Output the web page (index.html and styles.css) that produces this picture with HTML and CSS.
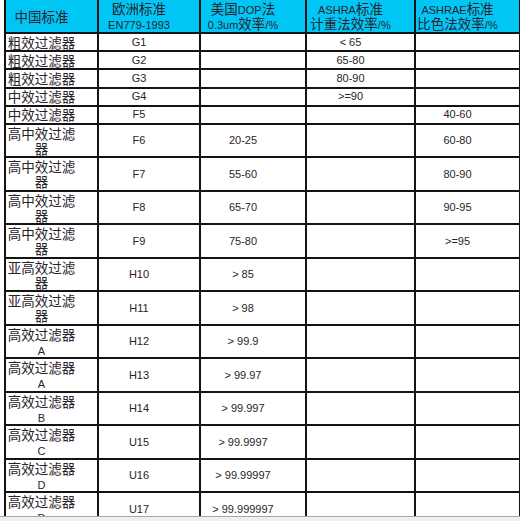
FILE: index.html
```html
<!DOCTYPE html>
<html lang="zh-CN">
<head>
<meta charset="utf-8">
<title>过滤器标准对照表</title>
<link rel="stylesheet" href="styles.css">
</head>
<body>
<div class="viewport">
  <table class="grid">
    <colgroup>
      <col class="c1"><col class="c2"><col class="c3"><col class="c4"><col class="c5">
    </colgroup>
    <thead>
      <tr class="head">
        <th>中国标准</th>
        <th>欧洲标准<br><span class="en">EN779-1993</span></th>
        <th>美国<span class="en">DOP</span>法<br><span class="en">0.3um</span>效率<span class="en">/%</span></th>
        <th><span class="en">ASHRA</span>标准<br>计重法效率<span class="en">/%</span></th>
        <th><span class="en">ASHRAE</span>标准<br>比色法效率<span class="en">/%</span></th>
      </tr>
    </thead>
    <tbody>
      <tr class="one"><td class="name">粗效过滤器</td><td>G1</td><td></td><td>&lt; 65</td><td></td></tr>
      <tr class="one"><td class="name">粗效过滤器</td><td>G2</td><td></td><td>65-80</td><td></td></tr>
      <tr class="one"><td class="name">粗效过滤器</td><td>G3</td><td></td><td>80-90</td><td></td></tr>
      <tr class="one"><td class="name">中效过滤器</td><td>G4</td><td></td><td>&gt;=90</td><td></td></tr>
      <tr class="one"><td class="name">中效过滤器</td><td>F5</td><td></td><td></td><td>40-60</td></tr>
      <tr class="two"><td class="name">高中效过滤<br>器</td><td>F6</td><td>20-25</td><td></td><td>60-80</td></tr>
      <tr class="two"><td class="name">高中效过滤<br>器</td><td>F7</td><td>55-60</td><td></td><td>80-90</td></tr>
      <tr class="two"><td class="name">高中效过滤<br>器</td><td>F8</td><td>65-70</td><td></td><td>90-95</td></tr>
      <tr class="two"><td class="name">高中效过滤<br>器</td><td>F9</td><td>75-80</td><td></td><td>&gt;=95</td></tr>
      <tr class="two"><td class="name">亚高效过滤<br>器</td><td>H10</td><td>&gt; 85</td><td></td><td></td></tr>
      <tr class="two"><td class="name">亚高效过滤<br>器</td><td>H11</td><td>&gt; 98</td><td></td><td></td></tr>
      <tr class="two"><td class="name">高效过滤器<br><span class="en">A</span></td><td>H12</td><td>&gt; 99.9</td><td></td><td></td></tr>
      <tr class="two"><td class="name">高效过滤器<br><span class="en">A</span></td><td>H13</td><td>&gt; 99.97</td><td></td><td></td></tr>
      <tr class="two"><td class="name">高效过滤器<br><span class="en">B</span></td><td>H14</td><td>&gt; 99.997</td><td></td><td></td></tr>
      <tr class="two"><td class="name">高效过滤器<br><span class="en">C</span></td><td>U15</td><td>&gt; 99.9997</td><td></td><td></td></tr>
      <tr class="two"><td class="name">高效过滤器<br><span class="en">D</span></td><td>U16</td><td>&gt; 99.99997</td><td></td><td></td></tr>
      <tr class="two"><td class="name">高效过滤器<br><span class="en">D</span></td><td>U17</td><td>&gt; 99.999997</td><td></td><td></td></tr>
    </tbody>
  </table>
</div>
<div class="statusbar"></div>
</body>
</html>
```

FILE: styles.css
```css
html, body {
  margin: 0;
  padding: 0;
  background: #ffffff;
}

.viewport {
  height: 516px;
  overflow: hidden;
  padding-left: 4px;
}

.grid {
  border-collapse: collapse;
  table-layout: fixed;
  width: 515px;
  font-family: "Liberation Sans", Arial, sans-serif;
  font-size: 11px;
  line-height: 15px;
  color: #2a232a;
}

.c1 { width: 93px; }
.c2 { width: 102px; }
.c3 { width: 106px; }
.c4 { width: 109px; }
.c5 { width: 105px; }

.grid th,
.grid td {
  border: 2px solid #141414;
  padding: 0 20px 0 0;
  text-align: center;
  vertical-align: middle;
  font-weight: normal;
}

.grid thead th {
  background: #00c6f6;
  border-top: none;
}

.grid th,
.grid td.name {
  font-family: "Noto Sans CJK SC", "Liberation Sans", sans-serif;
  font-size: 13.5px;
  line-height: 15px;
}

.en {
  font-family: "Liberation Sans", Arial, sans-serif;
  font-size: 11px;
  line-height: 0;
}

.head { height: 33px; }
.one { height: 18.2px; }
.two { height: 33.5px; }

.statusbar {
  height: 4px;
  border-top: 1px solid #a8a8a8;
  background: #efefef;
}
```
